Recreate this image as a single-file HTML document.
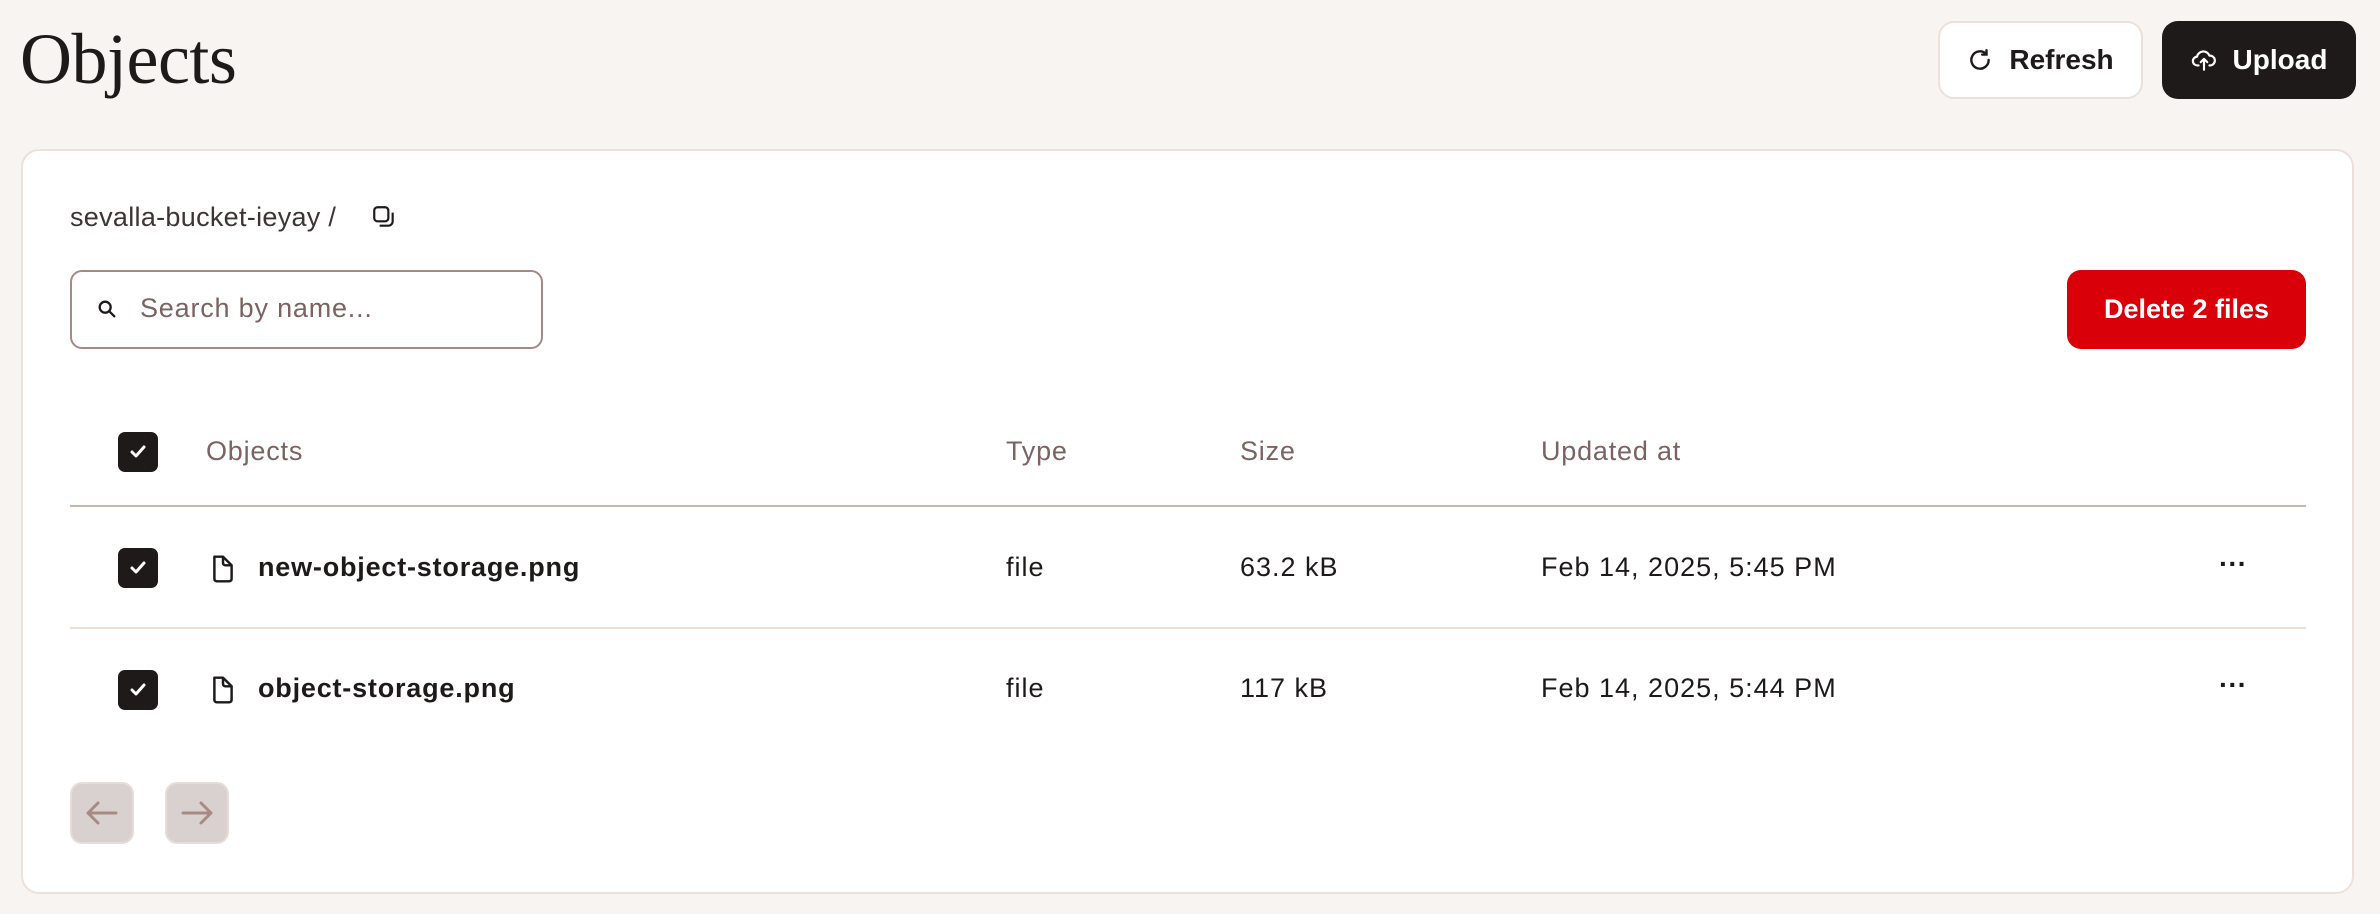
<!DOCTYPE html>
<html><head><meta charset="utf-8"><style>
*{box-sizing:border-box;margin:0;padding:0}
body{width:2380px;height:914px;background:#f8f4f1;font-family:"Liberation Sans",sans-serif;color:#1e1a1a;position:relative;overflow:hidden}
.abs{position:absolute}
h1{position:absolute;left:20px;top:18px;font-family:"Liberation Serif",serif;font-weight:400;font-size:72px;color:#1e1a1a;letter-spacing:-0.5px}
.btn{position:absolute;top:21px;height:78px;border-radius:16px;display:flex;align-items:center;justify-content:center;font-weight:700;font-size:28px}
.card{position:absolute;left:21px;top:149px;width:2333px;height:745px;background:#fff;border:2px solid #ece1da;border-radius:18px}
.cb{position:absolute;left:118px;width:40px;height:40px;background:#1e1a1a;border-radius:7px;display:flex;align-items:center;justify-content:center}
.hd{position:absolute;top:436px;font-size:27px;color:#7a6360;letter-spacing:0.8px}
.cell{position:absolute;font-size:27px;color:#1e1a1a;letter-spacing:1px}
.pg{position:absolute;top:782px;width:64px;height:62px;background:#d9d1cf;border:2px solid #e8dcd8;border-radius:12px;display:flex;align-items:center;justify-content:center}
</style></head><body>
<h1>Objects</h1>
<div class="btn" style="left:1938px;width:205px;background:#fff;border:2px solid #ece1da;color:#1e1a1a">
<svg width="26" height="26" viewBox="0 0 24 24" fill="none" stroke="#1e1a1a" stroke-width="2.2" stroke-linecap="round" style="margin-right:16px"><path d="M20 12a8 8 0 1 1-2.4-5.7"/><path d="M18 3v4h-4"/></svg>Refresh</div>
<div class="btn" style="left:2162px;width:194px;background:#1e1a1a;color:#fff">
<svg width="26" height="26" viewBox="0 0 24 24" fill="none" stroke="#fff" stroke-width="2" stroke-linecap="round" stroke-linejoin="round" style="margin-right:16px"><path d="M7 17H6a4 4 0 0 1-.5-8A6 6 0 0 1 17 8a4.5 4.5 0 0 1 1 9h-1"/><path d="M12 21v-9M9 14l3-3 3 3"/></svg>Upload</div>
<div class="card"></div>
<div class="abs" style="left:70px;top:202px;font-size:27px;color:#3d3433;letter-spacing:0.3px">sevalla-bucket-ieyay /</div>
<svg class="abs" style="left:371px;top:204px" width="26" height="26" viewBox="0 0 24 24" fill="none" stroke="#1e1a1a" stroke-width="2"><rect x="3" y="3" width="13" height="13" rx="3"/><path d="M8 20h8a4 4 0 0 0 4-4V8"/></svg>
<div class="abs" style="left:70px;top:270px;width:473px;height:79px;border:2px solid #a48a85;border-radius:12px"></div>
<svg class="abs" style="left:96px;top:298px" width="22" height="22" viewBox="0 0 24 24" fill="none" stroke="#1e1a1a" stroke-width="2.5" stroke-linecap="round"><circle cx="10" cy="10" r="6"/><path d="M15 15l5 5"/></svg>
<div class="abs" style="left:140px;top:293px;font-size:27px;color:#7a6360;letter-spacing:0.8px">Search by name...</div>
<div class="abs" style="left:2067px;top:270px;width:239px;height:79px;background:#d9000a;border-radius:14px;color:#fff;font-weight:700;font-size:27px;display:flex;align-items:center;justify-content:center">Delete 2 files</div>

<div class="cb" style="top:432px"><svg width="20" height="20" viewBox="0 0 20 20"><path d="M4 10l4 4 8-9" fill="none" stroke="#fff" stroke-width="3" stroke-linecap="round" stroke-linejoin="round"/></svg></div>
<div class="hd" style="left:206px">Objects</div>
<div class="hd" style="left:1006px">Type</div>
<div class="hd" style="left:1240px">Size</div>
<div class="hd" style="left:1541px">Updated at</div>
<div class="abs" style="left:70px;top:505px;width:2236px;height:2px;background:#c9b5ad"></div>

<div class="cb" style="top:548px"><svg width="20" height="20" viewBox="0 0 20 20"><path d="M4 10l4 4 8-9" fill="none" stroke="#fff" stroke-width="3" stroke-linecap="round" stroke-linejoin="round"/></svg></div>
<svg class="abs" style="left:208px;top:553px" width="30" height="32" viewBox="0 0 24 26" fill="none" stroke="#1e1a1a" stroke-width="2" stroke-linejoin="round"><path d="M5 3h7l7 7v11a2 2 0 0 1-2 2H7a2 2 0 0 1-2-2z"/><path d="M12 3v5a2 2 0 0 0 2 2h5"/></svg>
<div class="cell" style="left:258px;top:552px;font-weight:700;letter-spacing:0.8px">new-object-storage.png</div>
<div class="cell" style="left:1006px;top:552px">file</div>
<div class="cell" style="left:1240px;top:552px">63.2 kB</div>
<div class="cell" style="left:1541px;top:552px">Feb 14, 2025, 5:45 PM</div>
<div class="cell" style="left:2219px;top:548px;font-weight:700;font-size:28px;letter-spacing:0">···</div>
<div class="abs" style="left:70px;top:627px;width:2236px;height:2px;background:#ecdfd8"></div>

<div class="cb" style="top:670px"><svg width="20" height="20" viewBox="0 0 20 20"><path d="M4 10l4 4 8-9" fill="none" stroke="#fff" stroke-width="3" stroke-linecap="round" stroke-linejoin="round"/></svg></div>
<svg class="abs" style="left:208px;top:674px" width="30" height="32" viewBox="0 0 24 26" fill="none" stroke="#1e1a1a" stroke-width="2" stroke-linejoin="round"><path d="M5 3h7l7 7v11a2 2 0 0 1-2 2H7a2 2 0 0 1-2-2z"/><path d="M12 3v5a2 2 0 0 0 2 2h5"/></svg>
<div class="cell" style="left:258px;top:673px;font-weight:700;letter-spacing:0.8px">object-storage.png</div>
<div class="cell" style="left:1006px;top:673px">file</div>
<div class="cell" style="left:1240px;top:673px">117 kB</div>
<div class="cell" style="left:1541px;top:673px">Feb 14, 2025, 5:44 PM</div>
<div class="cell" style="left:2219px;top:669px;font-weight:700;font-size:28px;letter-spacing:0">···</div>

<div class="pg" style="left:70px"><svg width="36" height="30" viewBox="0 0 36 30" fill="none" stroke="#a88a84" stroke-width="3" stroke-linecap="round" stroke-linejoin="round"><path d="M32 15H4M14 5L4 15l10 10"/></svg></div>
<div class="pg" style="left:165px"><svg width="36" height="30" viewBox="0 0 36 30" fill="none" stroke="#a88a84" stroke-width="3" stroke-linecap="round" stroke-linejoin="round"><path d="M4 15h28M22 5l10 10-10 10"/></svg></div>
</body></html>
